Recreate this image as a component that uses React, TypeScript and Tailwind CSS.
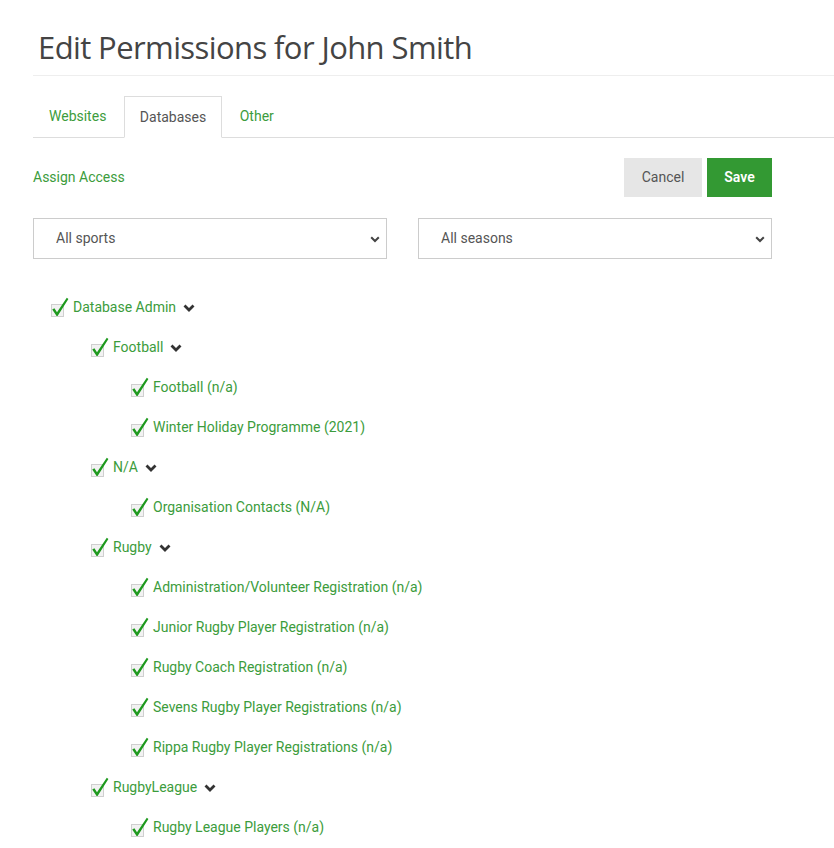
import React, { useState } from "react";

type Node = {
  label: string;
  children?: Node[];
};

const tree: Node[] = [
  {
    label: "Database Admin",
    children: [
      {
        label: "Football",
        children: [{ label: "Football (n/a)" }, { label: "Winter Holiday Programme (2021)" }],
      },
      {
        label: "N/A",
        children: [{ label: "Organisation Contacts (N/A)" }],
      },
      {
        label: "Rugby",
        children: [
          { label: "Administration/Volunteer Registration (n/a)" },
          { label: "Junior Rugby Player Registration (n/a)" },
          { label: "Rugby Coach Registration (n/a)" },
          { label: "Sevens Rugby Player Registrations (n/a)" },
          { label: "Rippa Rugby Player Registrations (n/a)" },
        ],
      },
      {
        label: "RugbyLeague",
        children: [{ label: "Rugby League Players (n/a)" }],
      },
    ],
  },
];

function CheckBox() {
  return (
    <svg width="18" height="20" viewBox="0 0 18 20" className="shrink-0">
      <rect x="0.5" y="7.5" width="12" height="12" fill="#f2f2f2" stroke="#cfcfcf" />
      <path d="M1.2 12.6 L3.4 11.2 L6 15.2 L15.8 0.8 L17.4 2 L6.6 19 L5.6 19 Z" fill="#1e991e" />
    </svg>
  );
}

function Chevron({ className = "" }: { className?: string }) {
  return (
    <svg width="12" height="8" viewBox="0 0 12 8" className={className}>
      <path d="M1.5 1.5 L6 6 L10.5 1.5" fill="none" stroke="#333" strokeWidth="2.8" />
    </svg>
  );
}

function TreeRow({ node, level }: { node: Node; level: number }) {
  return (
    <>
      <div className="h-10 flex items-center" style={{ paddingLeft: 18 + level * 40 }}>
        <CheckBox />
        <span className="ml-[4px] text-[14px] text-[#3c9c3c]">{node.label}</span>
        {node.children && <Chevron className="ml-[7px] mt-[1px]" />}
      </div>
      {node.children?.map((c) => (
        <TreeRow key={c.label} node={c} level={level + 1} />
      ))}
    </>
  );
}

function Select({ value }: { value: string }) {
  return (
    <div className="relative w-[354px] h-[41px]">
      <select
        defaultValue={value}
        className="appearance-none w-full h-full border border-[#cccccc] bg-white pl-[22px] text-[14px] text-[#555] outline-none"
      >
        <option>{value}</option>
      </select>
      <svg
        width="10"
        height="7"
        viewBox="0 0 10 7"
        className="absolute right-[7px] top-[18px] pointer-events-none"
      >
        <path d="M1.2 1.2 L5 5 L8.8 1.2" fill="none" stroke="#444" strokeWidth="2" />
      </svg>
    </div>
  );
}

export default function App() {
  const [tab, setTab] = useState("Databases");
  const tabs = ["Websites", "Databases", "Other"];

  return (
    <div className="min-h-screen bg-white pl-[33px] font-['Roboto',sans-serif] overflow-hidden">
      <h1 className="pl-[5px] pt-[27px] h-[76px] text-[31px] leading-[40px] text-[#444] font-['Open_Sans',sans-serif] tracking-[-0.6px] border-b border-[#eeeeee]">
        Edit Permissions for John Smith
      </h1>

      <nav className="mt-[20px] flex border-b border-[#dddddd] h-[42px]">
        {tabs.map((t) => (
          <button
            key={t}
            onClick={() => setTab(t)}
            className={
              t === tab
                ? "mr-[2px] px-[14.5px] h-[42px] text-[14px] text-[#555] bg-white border border-[#dddddd] border-b-white -mb-px"
                : "mr-[2px] px-[16px] h-[41px] text-[14px] text-[#3c9c3c]"
            }
          >
            {t}
          </button>
        ))}
      </nav>

      <div className="w-[739px]">
        <div className="mt-[20px] flex items-center justify-between">
          <a className="text-[14px] text-[#3c9c3c] cursor-pointer">Assign Access</a>
          <div className="flex gap-[5px]">
            <button className="w-[78px] h-[39px] bg-[#e6e6e6] text-[14px] text-[#555]">Cancel</button>
            <button className="w-[65px] h-[39px] bg-[#339933] text-[14px] font-semibold text-white">
              Save
            </button>
          </div>
        </div>

        <div className="mt-[21px] flex justify-between">
          <Select value="All sports" />
          <Select value="All seasons" />
        </div>

        <div className="mt-[28px]">
          {tree.map((n) => (
            <TreeRow key={n.label} node={n} level={0} />
          ))}
        </div>
      </div>
    </div>
  );
}
